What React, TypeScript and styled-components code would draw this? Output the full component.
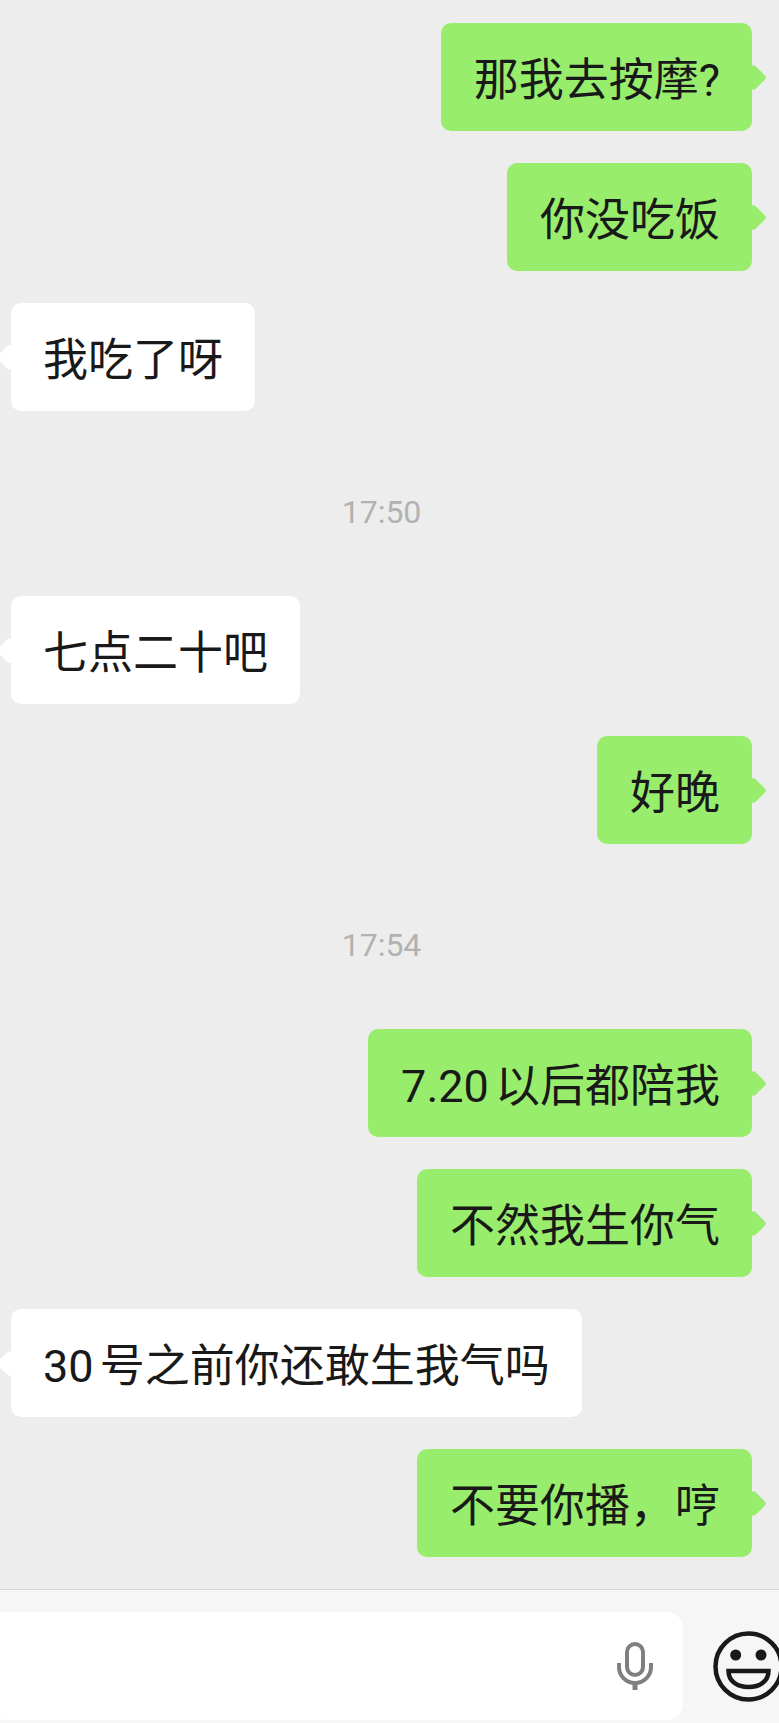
import { FunctionComponent } from 'react'
import { createGlobalStyle, styled } from 'styled-components'

const COLOR_PAGE = '#ededed'
const COLOR_GREEN = '#98ed6c'
const COLOR_TEXT = '#191919'

const GlobalStyle = createGlobalStyle`
  html, body {
    margin: 0;
    padding: 0;
    background: ${COLOR_PAGE};
  }
`

const Screen = styled.div`
  width: 779px;
  height: 1723px;
  overflow: hidden;
  display: flex;
  flex-direction: column;
  background: ${COLOR_PAGE};
  font-family: Roboto, 'Noto Sans CJK SC', sans-serif;
`

const Messages = styled.div`
  flex: 1;
  display: flex;
  flex-direction: column;
  gap: 32px;
  padding: 23px 27px 0 11px;
`

const Row = styled.div<{ $mine?: boolean }>`
  display: flex;
  justify-content: ${(props) => (props.$mine ? 'flex-end' : 'flex-start')};
`

const Bubble = styled.div<{ $mine?: boolean }>`
  position: relative;
  box-sizing: border-box;
  height: 108px;
  padding: 0 32px 2px ${(props) => (props.$mine ? '33px' : '32px')};
  border-radius: 10px;
  display: flex;
  align-items: center;
  font-size: 45px;
  white-space: pre;
  word-spacing: -5px;
  color: ${COLOR_TEXT};
  background: ${(props) => (props.$mine ? COLOR_GREEN : 'white')};
  &::after {
    content: '';
    position: absolute;
    top: 50%;
    ${(props) => (props.$mine ? 'right: -11px;' : 'left: -11px;')}
    width: 19px;
    height: 19px;
    margin-top: -9.5px;
    border-radius: 3px;
    transform: rotate(45deg);
    background: inherit;
  }
`

const TimeLabel = styled.div`
  margin: 49px 0 32px;
  height: 40px;
  line-height: 40px;
  text-align: center;
  font-size: 32px;
  color: #b2b2b2;
`

const BottomBar = styled.div`
  height: 134px;
  box-sizing: border-box;
  flex-shrink: 0;
  border-top: 1px solid #d6d6d6;
  background: #f6f6f6;
  display: flex;
  align-items: flex-start;
  gap: 30px;
  padding-top: 22px;
`

const InputBox = styled.div`
  flex-shrink: 0;
  width: 693px;
  height: 108px;
  margin-left: -10px;
  padding-right: 30px;
  box-sizing: border-box;
  border-radius: 16px;
  background: white;
  display: flex;
  align-items: center;
  justify-content: flex-end;
`

const FaceIcon = styled.svg`
  flex-shrink: 0;
  margin-top: 19px;
`

const MicIcon: FunctionComponent = () => (
  <svg width="36" height="48" viewBox="0 0 36 48" fill="none" stroke="#7f7f7f" strokeWidth="4">
    <rect x="10" y="2" width="16" height="31" rx="8" />
    <path d="M2 21v4a16 16 0 0 0 32 0v-4" />
    <path d="M18 41v7" strokeWidth="5" />
  </svg>
)

const App: FunctionComponent = () => {
  return (
    <Screen>
      <GlobalStyle />
      <Messages>
        <Row $mine>
          <Bubble $mine>那我去按摩?</Bubble>
        </Row>
        <Row $mine>
          <Bubble $mine>你没吃饭</Bubble>
        </Row>
        <Row>
          <Bubble>我吃了呀</Bubble>
        </Row>
        <TimeLabel>17:50</TimeLabel>
        <Row>
          <Bubble>七点二十吧</Bubble>
        </Row>
        <Row $mine>
          <Bubble $mine>好晚</Bubble>
        </Row>
        <TimeLabel>17:54</TimeLabel>
        <Row $mine>
          <Bubble $mine>7.20 以后都陪我</Bubble>
        </Row>
        <Row $mine>
          <Bubble $mine>不然我生你气</Bubble>
        </Row>
        <Row>
          <Bubble>30 号之前你还敢生我气吗</Bubble>
        </Row>
        <Row $mine>
          <Bubble $mine>不要你播，哼</Bubble>
        </Row>
      </Messages>
      <BottomBar>
        <InputBox>
          <MicIcon />
        </InputBox>
        <FaceIcon width="71" height="71" viewBox="0 0 71 71" fill="none" stroke="#191919" strokeWidth="4.5">
          <circle cx="35.5" cy="35.5" r="33" />
          <circle cx="22.7" cy="24" r="5.5" fill="#191919" stroke="none" />
          <circle cx="48" cy="24" r="5.5" fill="#191919" stroke="none" />
          <path d="M15.5 40H55.500C55.500 50 47 56 35.500 56C24 56 15.500 50 15.500 40Z" />
        </FaceIcon>
      </BottomBar>
    </Screen>
  )
}

export default App
